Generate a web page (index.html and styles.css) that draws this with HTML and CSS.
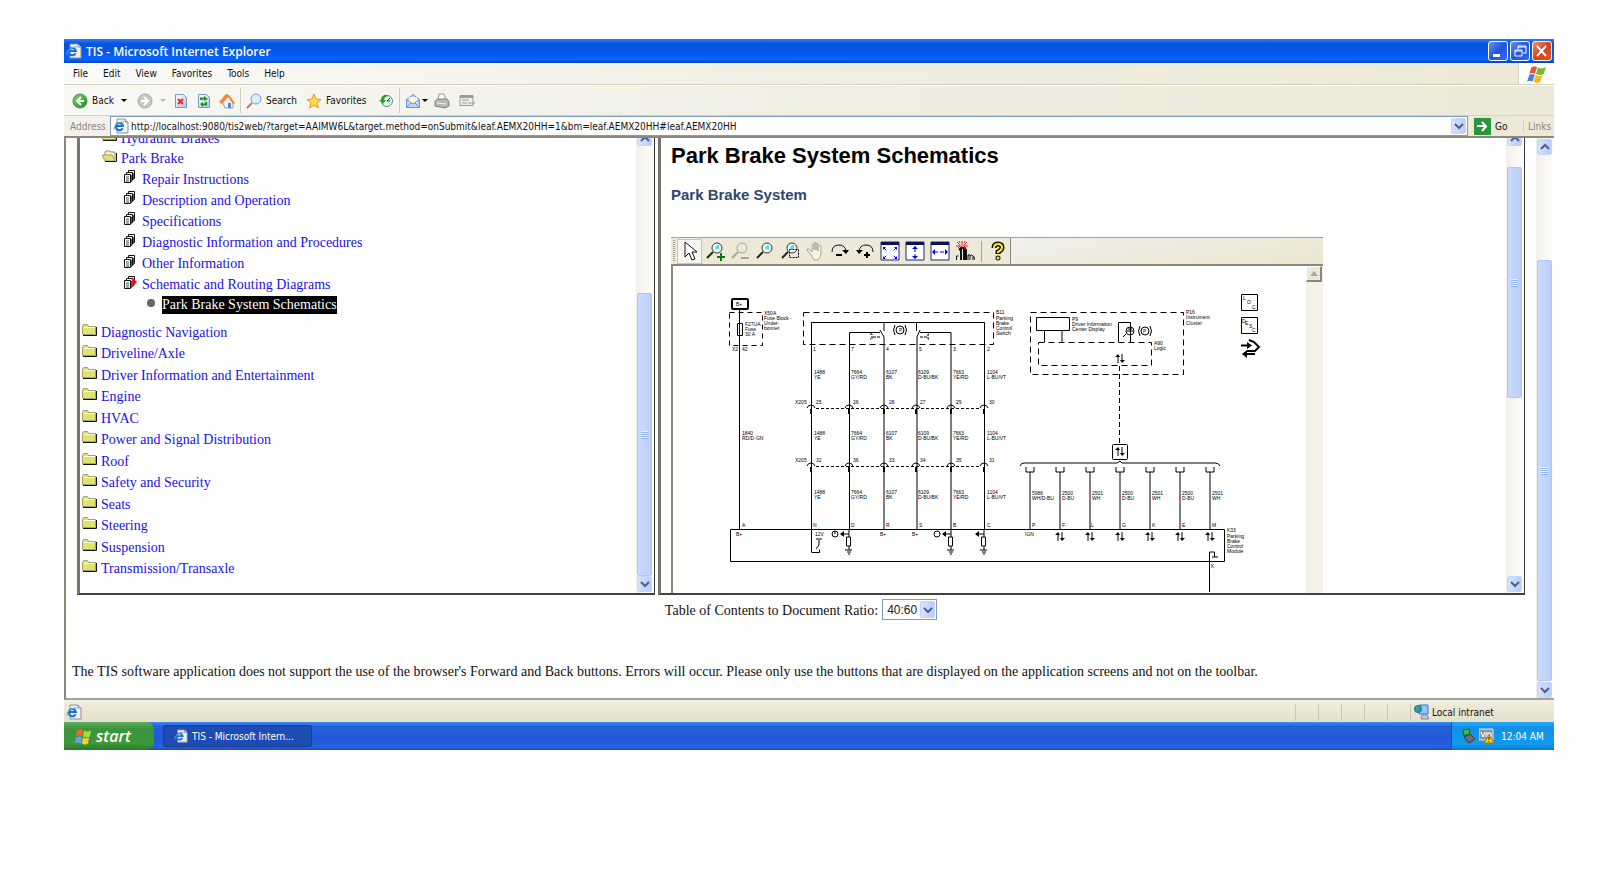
FILE: index.html
```html
<!DOCTYPE html>
<html lang="en">
<head>
  <meta charset="UTF-8" />
  <meta name="viewport" content="width=device-width, initial-scale=1" />
  <title>TIS - Microsoft Internet Explorer</title>
  <link rel="stylesheet" href="styles.css">
</head>
<body>

<!-- Shared icons -->
<svg class="defs" width="0" height="0" aria-hidden="true">
  <defs>
    <linearGradient id="green" x1="0" y1="0" x2="1" y2="1"><stop offset="0" stop-color="#7fd47c"/><stop offset="1" stop-color="#1d8a1d"/></linearGradient>
    <linearGradient id="page-fill" x1="0" y1="0" x2="1" y2="1"><stop offset="0" stop-color="#fff"/><stop offset="1" stop-color="#a9c6f2"/></linearGradient>
    <symbol id="ie" viewBox="0 0 16 16">
      <path d="M4 1h8l3 3v11H4z" fill="#f4f2e6" stroke="#8a8fa8"/>
      <path d="M12 1v3h3" fill="#cdd3e6" stroke="#8a8fa8"/>
      <path d="M9.6 10.2A3.6 3.6 0 1 1 9.9 8H3.4" fill="none" stroke="#1c6fd0" stroke-width="2"/>
      <path d="M1 12C0 8 6 3 11 4" fill="none" stroke="#4fb0f0"/>
    </symbol>
    <symbol id="flag" viewBox="0 0 18 16">
      <path d="M4 2q3-2 5 0l-2 6q-2-2-5 0z" fill="#e8562a"/>
      <path d="M10 2q3 2 7 0l-2 6q-3 2-7 0z" fill="#79b935"/>
      <path d="M2 9q3-2 5 0l-2 6q-2-2-5 0z" fill="#4a80d8"/>
      <path d="M8 9q3 2 6 0l-2 6q-3 2-6 0z" fill="#f6b91c"/>
    </symbol>
    <symbol id="flag-bright" viewBox="0 0 18 16">
      <path d="M3 2q3-2 6 0l-1 6q-3-2-6 0z" fill="#f0662c"/>
      <path d="M10 2q3 2 7 0l-1 6q-3 2-7 0z" fill="#a4dc3c"/>
      <path d="M2 9q3-2 6 0l-1 6q-3-2-6 0z" fill="#6c9cf4"/>
      <path d="M9 9q3 2 6 0l-1 6q-3 2-6 0z" fill="#fcd02c"/>
    </symbol>
    <symbol id="chev-down" viewBox="0 0 10 8"><path d="M1 2l4 4 4-4" fill="none" stroke="#4d6185" stroke-width="2"/></symbol>
    <symbol id="chev-up" viewBox="0 0 10 8"><path d="M1 6l4-4 4 4" fill="none" stroke="#4d6185" stroke-width="2"/></symbol>
    <symbol id="caret" viewBox="0 0 6 4"><path d="M0 0h6L3 3z"/></symbol>
    <symbol id="folder" viewBox="0 0 15 12">
      <path d="M.5 10.500v-8l1-2h4l1 2h7v8z" fill="#e3e36c" stroke="#a0a078"/>
      <path d="M2 3.500h11" stroke="#ffffe0"/>
      <path d="M1 11.500h13.500V3" fill="none" stroke="#111"/>
    </symbol>
    <symbol id="folder-open" viewBox="0 0 15 12">
      <path d="M3 9V2l1-1h4l1 1h4v8" fill="#f5f5c0" stroke="#909070"/>
      <path d="M0 5h10l3 6H3z" fill="#e3e36c" stroke="#a0a070"/>
      <path d="M3 11.500h11.500V3" fill="none" stroke="#111"/>
    </symbol>
    <symbol id="docs" viewBox="0 0 14 13">
      <path d="M4.500 .5h6v8h-6z" fill="#fff" stroke="#111"/>
      <path d="M2.500 2.500h6v8h-6z" fill="#fff" stroke="#111"/>
      <path d="M.5 4.500h6v8h-6z" fill="#fff" stroke="#111"/>
      <path d="M2 7h3M2 9h3M2 11h3" stroke="#2c5a50"/>
      <path d="M7.500 5v7M9.500 3v7" stroke="#555"/>
    </symbol>
    <symbol id="lens" viewBox="0 0 20 20">
      <circle cx="12" cy="7" r="5" fill="#f6ffff" stroke="#333"/>
      <path d="M10 8q0-4 4-4v4z" fill="#53dbe6"/>
      <path d="M8 11l-6 6" stroke="#222" stroke-width="2"/>
    </symbol>
  </defs>
</svg>

<div class="window">
  <header class="titlebar">
    <svg width="16" height="16"><use href="#ie"/></svg>
    <span class="title">TIS - Microsoft Internet Explorer</span>
    <button class="win-btn" aria-label="Minimize"><svg width="18" height="18"><path d="M4 12h7v3H4z" fill="#fff"/></svg></button>
    <button class="win-btn" aria-label="Restore"><svg width="18" height="18" fill="none" stroke="#fff"><path d="M7 7V4h8v7h-3M7 5h8"/><path d="M4 8h7v6H4zM4 9h7"/></svg></button>
    <button class="win-btn close" aria-label="Close"><svg width="18" height="18"><path d="M4 4l9 10M13 4L4 14" stroke="#fff" stroke-width="2"/></svg></button>
  </header>

  <nav class="menubar">
    <a href="#">File</a>
    <a href="#">Edit</a>
    <a href="#">View</a>
    <a href="#">Favorites</a>
    <a href="#">Tools</a>
    <a href="#">Help</a>
    <span class="throbber"><svg width="20" height="18"><use href="#flag"/></svg></span>
  </nav>

  <div class="toolbar">
    <button class="tool back">
      <svg width="16" height="16"><circle cx="8" cy="8" r="7" fill="url(#green)" stroke="#3f9c3c"/><path d="M9 4L5 8l4 4M5 8h7" fill="none" stroke="#fff" stroke-width="2"/></svg>
      Back
      <svg class="caret" width="6" height="4"><use href="#caret"/></svg>
    </button>
    <button class="tool forward" aria-label="Forward">
      <svg width="16" height="16"><circle cx="8" cy="8" r="7" fill="#c9c9c9" stroke="#a9a9a9"/><path d="M7 4l4 4-4 4M11 8H4" fill="none" stroke="#fff" stroke-width="2"/></svg>
      <svg class="caret" width="6" height="4" fill="#bbb"><use href="#caret"/></svg>
    </button>
    <button class="tool" aria-label="Stop"><svg width="16" height="16"><path d="M2.500 1.500h8l3 3v10h-11z" fill="url(#page-fill)" stroke="#8097c4"/><path d="M5 6l5 5M10 6l-5 5" stroke="#e0301a" stroke-width="2"/></svg></button>
    <button class="tool" aria-label="Refresh"><svg width="16" height="16"><path d="M2.500 1.500h8l3 3v10h-11z" fill="url(#page-fill)" stroke="#8097c4"/><path d="M5 7V5.500h4M10 9v2.500H6" fill="none" stroke="#1c951c" stroke-width="2"/><path d="M8 3l4 3-4 2zM7 9l-3 2 3 3z" fill="#1c951c"/></svg></button>
    <button class="tool" aria-label="Home"><svg width="16" height="16"><path d="M3 8l6-5 5 6v6H6z" fill="#eef3ff" stroke="#8aa0d0"/><path d="M0 9l7-8 3 1 6 8-2 1-5-7-6 7z" fill="#f08a35"/><path d="M9 10h3v5H9z" fill="#5c86cc"/></svg></button>
    <span class="sep"></span>
    <button class="tool labelled"><svg width="16" height="16"><circle cx="10" cy="6" r="5" fill="#d9efff" stroke="#6f9fd8"/><path d="M6 10l-5 5" stroke="#c07a52" stroke-width="2"/></svg> Search</button>
    <button class="tool labelled fav"><svg width="16" height="16"><path d="M8 1l2 5 5 .5-4 3.500 1.500 5L8 12l-4.500 3L5 10 1 6.500 6 6z" fill="#ffe04a" stroke="#e0961e"/></svg> Favorites</button>
    <button class="tool" aria-label="History"><svg width="16" height="16"><circle cx="9" cy="8" r="5.500" fill="#e4f3ec" stroke="#5c8f7c"/><path d="M9 8l3-3M9 8h3" stroke="#333"/><path d="M1 7l4 4 3-4H6c0-2 2-4 5-4C7 0 3 3 3 7z" fill="#2ea02c"/></svg></button>
    <span class="sep"></span>
    <button class="tool mail" aria-label="Mail">
      <svg width="16" height="16"><path d="M1.500 6.500L8 1.500l6.500 5v8h-13z" fill="#bcd8fa" stroke="#6c93cf"/><path d="M4 4h8v6H4z" fill="#fff4d8"/><path d="M2 7l6 4 6-4M2 14l4-4M14 14l-4-4" fill="none" stroke="#6c93cf"/></svg>
      <svg class="caret" width="6" height="4"><use href="#caret"/></svg>
    </button>
    <button class="tool" aria-label="Print"><svg width="16" height="16"><path d="M4 7l1-6h5l2 6z" fill="#fff" stroke="#999"/><path d="M1 8l3-2h9l2 3v4l-4 2-10-2z" fill="#b8b8b8" stroke="#808080"/><path d="M3 10l9 1" stroke="#f4f4f4"/></svg></button>
    <button class="tool edit" aria-label="Discuss"><svg width="16" height="16"><path d="M1 2.500h13v10H1z" fill="#eee" stroke="#9a9a9a"/><path d="M1 4h13" stroke="#9a9a9a" stroke-width="2"/><path d="M3 7h7M3 10h5M9 10h7" stroke="#9a9a9a"/></svg></button>
  </div>

  <div class="addressbar">
    <label for="url">Address</label>
    <div class="url-box">
      <svg width="16" height="16"><use href="#ie"/></svg>
      <input id="url" type="text" value="http://localhost:9080/tis2web/?target=AAIMW6L&amp;target.method=onSubmit&amp;leaf.AEMX20HH=1&amp;bm=leaf.AEMX20HH#leaf.AEMX20HH">
      <button class="drop" aria-label="History"><svg width="10" height="8"><use href="#chev-down"/></svg></button>
    </div>
    <button class="go"><svg width="17" height="17"><path d="M0 0h17v17H0z" fill="#28963a"/><path d="M3 8h9M8 4l4 4.500L8 13" fill="none" stroke="#fff" stroke-width="2"/></svg> Go</button>
    <span class="links">Links</span>
  </div>

  <div class="page">
    <main class="page-body">
      <div class="frames">
        <section class="frame">
          <div class="toc">
            <ul class="level1">
              <li class="cut"><svg width="15" height="12"><use href="#folder"/></svg><a href="#">Hydraulic Brakes</a></li>
              <li><svg width="15" height="12"><use href="#folder-open"/></svg><a href="#">Park Brake</a></li>
            </ul>
            <ul class="level2">
              <li><svg width="14" height="13"><use href="#docs"/></svg><a href="#">Repair Instructions</a></li>
              <li><svg width="14" height="13"><use href="#docs"/></svg><a href="#">Description and Operation</a></li>
              <li><svg width="14" height="13"><use href="#docs"/></svg><a href="#">Specifications</a></li>
              <li><svg width="14" height="13"><use href="#docs"/></svg><a href="#">Diagnostic Information and Procedures</a></li>
              <li><svg width="14" height="13"><use href="#docs"/></svg><a href="#">Other Information</a></li>
              <li><svg width="14" height="13"><use href="#docs"/><path d="M8 1l5 5-5 5z" fill="#e8101c"/></svg><a href="#">Schematic and Routing Diagrams</a></li>
            </ul>
            <div class="level3"><svg width="8" height="8"><circle cx="4" cy="4" r="4" fill="#666"/></svg><a href="#">Park Brake System Schematics</a></div>
            <ul class="level0">
              <li><svg width="15" height="12"><use href="#folder"/></svg><a href="#">Diagnostic Navigation</a></li>
              <li><svg width="15" height="12"><use href="#folder"/></svg><a href="#">Driveline/Axle</a></li>
              <li><svg width="15" height="12"><use href="#folder"/></svg><a href="#">Driver Information and Entertainment</a></li>
              <li><svg width="15" height="12"><use href="#folder"/></svg><a href="#">Engine</a></li>
              <li><svg width="15" height="12"><use href="#folder"/></svg><a href="#">HVAC</a></li>
              <li><svg width="15" height="12"><use href="#folder"/></svg><a href="#">Power and Signal Distribution</a></li>
              <li><svg width="15" height="12"><use href="#folder"/></svg><a href="#">Roof</a></li>
              <li><svg width="15" height="12"><use href="#folder"/></svg><a href="#">Safety and Security</a></li>
              <li><svg width="15" height="12"><use href="#folder"/></svg><a href="#">Seats</a></li>
              <li><svg width="15" height="12"><use href="#folder"/></svg><a href="#">Steering</a></li>
              <li><svg width="15" height="12"><use href="#folder"/></svg><a href="#">Suspension</a></li>
              <li><svg width="15" height="12"><use href="#folder"/></svg><a href="#">Transmission/Transaxle</a></li>
            </ul>
          </div>
          <div class="scrollbar">
            <span class="arrow cut-arrow"><svg width="10" height="8"><use href="#chev-up"/></svg></span>
            <span class="thumb toc-thumb"><i></i></span>
            <span class="arrow"><svg width="10" height="8"><use href="#chev-down"/></svg></span>
          </div>
        </section>

        <section class="frame">
          <div class="doc">
            <h1>Park Brake System Schematics</h1>
            <h2>Park Brake System</h2>
            <div class="viewer">
              <div class="viewer-bar">
                <span class="grip"></span>
                <button class="vbtn active" aria-label="Select"><svg width="20" height="20"><path d="M5 1v15l4-4 3 7 3-1-3-7h5z" fill="#fff" stroke="#111"/></svg></button>
                <button class="vbtn" aria-label="Zoom in"><svg width="20" height="20"><use href="#lens"/><path d="M12 16h8M16 12v8" stroke="#0a7a0a" stroke-width="2"/></svg></button>
                <button class="vbtn" aria-label="Zoom out" disabled><svg width="20" height="20"><circle cx="12" cy="7" r="5" fill="none" stroke="#aaa797"/><path d="M8 11l-6 6M11 17h8" stroke="#aaa797" stroke-width="2"/></svg></button>
                <button class="vbtn" aria-label="Zoom"><svg width="20" height="20"><use href="#lens"/></svg></button>
                <button class="vbtn" aria-label="Zoom area"><svg width="20" height="20"><use href="#lens"/><path d="M9.500 8.500h9v8h-9z" fill="none" stroke="#111" stroke-dasharray="2 1"/></svg></button>
                <button class="vbtn" aria-label="Pan" disabled><svg width="20" height="20"><path d="M6 14L2 9q0-2 2-1l3 3V4q1-2 2 0v5-7q1-2 2 0v7-6q1-2 2 0v7-5q2-2 3 0v8q-1 4-3 6H9z" fill="#f4f2e6" stroke="#aaa797"/></svg></button>
                <button class="vbtn" aria-label="Rotate clockwise"><svg width="20" height="20"><path d="M2 11q0-7 7-7 6 0 7 6" fill="none" stroke="#111"/><path d="M12 9h7l-3 4zM6 13h6v2H6z"/></svg></button>
                <button class="vbtn" aria-label="Rotate counter-clockwise"><svg width="20" height="20"><path d="M4 10q1-6 7-6 7 0 7 7" fill="none" stroke="#111"/><path d="M1 9h7l-4 4zM9 13h6v2H9zM11 11h2v6h-2z"/></svg></button>
                <button class="vbtn" aria-label="Fit page"><svg width="20" height="20"><path d="M1 1h18v18H1z" fill="#fff" stroke="#222a66"/><path d="M1 1h18v3H1z" fill="#0c1060"/><path d="M4 7l3 3M16 7l-3 3M4 17l3-3M16 17l-3-3" stroke="#00f" stroke-dasharray="3 1"/><path d="M3 6h3L3 9zM17 6h-3l3 3zM3 18h3l-3-3zM17 18h-3l3-3z" fill="#00f"/></svg></button>
                <button class="vbtn" aria-label="Fit height"><svg width="20" height="20"><path d="M1 1h18v18H1z" fill="#fff" stroke="#222a66"/><path d="M1 1h18v3H1z" fill="#0c1060"/><path d="M10 7v10" stroke="#00f" stroke-dasharray="4 2"/><path d="M10 5l3 3H7zM10 18l3-3H7z" fill="#00f"/></svg></button>
                <button class="vbtn" aria-label="Fit width"><svg width="20" height="20"><path d="M1 1h18v18H1z" fill="#fff" stroke="#222a66"/><path d="M1 1h18v3H1z" fill="#0c1060"/><path d="M4 11h12" stroke="#00f" stroke-dasharray="4 2"/><path d="M2 11l3-3v6zM18 11l-3-3v6z" fill="#00f"/></svg></button>
                <button class="vbtn" aria-label="Highlight"><svg width="20" height="20"><path d="M7 0v4M2 1l3 3M12 1L9 4M1 5h12M4 0l1 2M10 0L9 2M3 7l2-2M11 7L9 5" stroke="#f02020"/><path d="M6 7v12M9 7v12M4 9l2-2h3l2 2v10" fill="none" stroke="#111" stroke-width="2"/><path d="M1.500 19v-4h2M13 19v-5q2-1 2 1v4m0-4q2-2 3 0v4m0-3q2-1 2 3" fill="none" stroke="#111"/></svg></button>
                <span class="vsep"></span>
                <button class="vbtn" aria-label="Help"><svg width="20" height="20"><path d="M6 7q0-4 4-4t4 3.500q0 2.500-4 4.500v2" fill="none" stroke="#111" stroke-width="5"/><circle cx="10" cy="17" r="2.500" fill="#111"/><path d="M6 7q0-4 4-4t4 3.500q0 2.500-4 4.500v1" fill="none" stroke="#ffe81a" stroke-width="2"/><circle cx="10" cy="17" r="1.500" fill="#ffe81a"/></svg></button>
                <span class="bar-rest"></span>
              </div>
              <div class="canvas">
                <svg class="schematic" width="633" height="328" viewBox="673 266 633 328">
                  <defs>
                    <g id="conn"><path d="M-4 3q1-3 4-3t4 3" stroke="#000" fill="none"/><path d="M0 4v5" stroke="#000" stroke-width="2"/></g>
                    <g id="updown"><path d="M-2 9V2M2 0v7" stroke="#000"/><path d="M-5 3l3-3 2 3zM0 6h5L2 9z" fill="#000"/></g>
                    <g id="load"><path d="M-2.500 8h4v9h-4zM0 0v8M0 17v4M-4 21h7M-2 23h4M-1 25h2" fill="none" stroke="#000"/></g>
                    <g id="tap"><path d="M-8 5h8" stroke="#000"/><path d="M-9 5l4-3v6z" fill="#000"/></g>
                    <g id="term"><path d="M-4 0v5h8V0M0 5v57" fill="none" stroke="#000"/></g>
                  </defs>

                  <!-- fuse block -->
                  <g fill="none" stroke="#000">
                    <rect x="732" y="299" width="16" height="10" rx="1" stroke-width="2"/>
                    <path d="M739.500 310v219M737.500 323.500h5v12h-5z"/>
                    <path d="M729.500 312.500h33v33h-33z" stroke-dasharray="5 4"/>
                  </g>
                  <text x="736" y="306">B+</text>
                  <text x="745" y="326">F27UA</text><text x="745" y="331">Fuse</text><text x="745" y="336">30 A</text>
                  <text x="764" y="315">X50A</text><text x="764" y="320">Fuse Block -</text><text x="764" y="325">Under-</text><text x="764" y="330">bonnet</text>
                  <text x="732" y="351">X2</text><text x="742" y="351">42</text>
                  <text x="742" y="435">1840</text><text x="742" y="440">RD/D-GN</text>

                  <!-- parking brake switch -->
                  <g fill="none" stroke="#000">
                    <path d="M803.500 312.500h190v32h-190z" stroke-dasharray="6 4"/>
                    <path d="M811.500 552V322.500h173V529M849.500 529V332.500H880M884 322v9M880 330l4 7v192M916.500 322v9M920 330l-3 7v192M920 332.500h31V529"/>
                    <path d="M870 334h2v5h-2M873 337h7M929 334h-1v5h1M927 337h-7" stroke-dasharray="3 1"/>
                    <circle cx="900" cy="330" r="4"/><path d="M895 325q-3 5 0 10M905 325q3 5 0 10"/>
                  </g>
                  <text x="899" y="332">P</text>
                  <text x="996" y="314">B11</text><text x="996" y="320">Parking</text><text x="996" y="325">Brake</text><text x="996" y="330">Control</text><text x="996" y="335">Switch</text>
                  <text x="813" y="351">1</text><text x="851" y="351">7</text><text x="886" y="351">4</text><text x="919" y="351">5</text><text x="953" y="351">3</text><text x="987" y="351">2</text>

                  <!-- wire numbers and colours, one row per connector section -->
                  <g id="wire-names">
                    <text x="814" y="374">1488</text><text x="814" y="379">YE</text>
                    <text x="851" y="374">7664</text><text x="851" y="379">GY/RD</text>
                    <text x="886" y="374">6107</text><text x="886" y="379">BK</text>
                    <text x="918" y="374">6109</text><text x="918" y="379">D-BU/BK</text>
                    <text x="953" y="374">7663</text><text x="953" y="379">YE/RD</text>
                    <text x="987" y="374">1104</text><text x="987" y="379">L-BU/VT</text>
                  </g>
                  <use href="#wire-names" y="61"/>
                  <use href="#wire-names" y="120"/>
                  <g id="conn-row">
                    <path d="M816 408.500h164" stroke="#000" stroke-dasharray="3 2"/>
                    <use href="#conn" x="811" y="405"/><use href="#conn" x="849" y="405"/><use href="#conn" x="884" y="405"/><use href="#conn" x="916" y="405"/><use href="#conn" x="951" y="405"/><use href="#conn" x="984" y="405"/>
                    <text x="795" y="404">X205</text>
                  </g>
                  <use href="#conn-row" y="58"/>
                  <text x="816" y="404">25</text><text x="853" y="404">26</text><text x="889" y="404">28</text><text x="920" y="404">27</text><text x="956" y="404">29</text><text x="989" y="404">30</text>
                  <text x="816" y="462">32</text><text x="853" y="462">36</text><text x="889" y="462">33</text><text x="920" y="462">34</text><text x="956" y="462">35</text><text x="989" y="462">31</text>
                  <text x="742" y="527">A</text><text x="813" y="527">N</text><text x="851" y="527">D</text><text x="886" y="527">R</text><text x="919" y="527">S</text><text x="953" y="527">B</text><text x="987" y="527">C</text>

                  <!-- control module -->
                  <g fill="none" stroke="#000">
                    <path d="M730.500 529.500h494v32h-494z"/>
                    <path d="M811.500 552.500h8v-3M816 549l3-4v-5M816 539h6"/>
                    <circle cx="835" cy="534" r="3"/><path d="M835 531v3"/><circle cx="937" cy="534" r="3"/>
                    <use href="#load" x="849" y="529"/><use href="#load" x="951" y="529"/><use href="#load" x="984" y="529"/>
                    <path d="M1209.500 592v-40h5v5M1212 557h6"/>
                  </g>
                  <use href="#tap" x="849" y="529"/><use href="#tap" x="951" y="529"/><use href="#tap" x="984" y="529"/>
                  <text x="736" y="536">B+</text><text x="815" y="536">12V</text><text x="880" y="536">B+</text><text x="912" y="536">B+</text><text x="1025" y="536">IGN</text>
                  <text x="1211" y="568">K</text>
                  <text x="1227" y="532">K33</text><text x="1227" y="538">Parking</text><text x="1227" y="543">Brake</text><text x="1227" y="548">Control</text><text x="1227" y="553">Module</text>

                  <!-- instrument cluster -->
                  <g fill="none" stroke="#000">
                    <path d="M1030.500 312.500h153v62h-153z" stroke-dasharray="6 4"/>
                    <path d="M1038.500 342.500h113v23h-113z" stroke-dasharray="6 4"/>
                    <path d="M1036.500 317.500h33v13h-33zM1044.500 331v11M1062 331v11M1118.500 342v-19.500h12V342"/>
                    <circle cx="1130" cy="331" r="4"/><path d="M1127 331h6M1128 329h4M1123 337l3-3"/>
                    <circle cx="1145" cy="331" r="4"/><path d="M1140 326q-3 5 0 10M1150 326q3 5 0 10"/>
                    <path d="M1119.500 366v78" stroke-dasharray="5 3"/>
                    <rect x="1112.500" y="444.500" width="15" height="15" rx="1"/>
                    <path d="M1020 466q1-3 4-3h93l3-2 2 2h93q4 0 5 3"/>
                  </g>
                  <use href="#updown" x="1120" y="354"/><use href="#updown" x="1120" y="447"/>
                  <text x="1143" y="333">P</text>
                  <text x="1072" y="321">P9</text><text x="1072" y="326">Driver Information</text><text x="1072" y="331">Center Display</text>
                  <text x="1154" y="345">A90</text><text x="1154" y="350">Logic</text>
                  <text x="1186" y="314">P16</text><text x="1186" y="319">Instrument</text><text x="1186" y="325">Cluster</text>

                  <!-- serial data terminals -->
                  <use href="#term" x="1030" y="467"/><use href="#term" x="1060" y="467"/><use href="#term" x="1090" y="467"/><use href="#term" x="1120" y="467"/><use href="#term" x="1150" y="467"/><use href="#term" x="1180" y="467"/><use href="#term" x="1210" y="467"/>
                  <text x="1032" y="495">5986</text><text x="1032" y="500">WH/D-BU</text>
                  <text x="1062" y="495">2500</text><text x="1062" y="500">D-BU</text>
                  <text x="1092" y="495">2501</text><text x="1092" y="500">WH</text>
                  <text x="1122" y="495">2500</text><text x="1122" y="500">D-BU</text>
                  <text x="1152" y="495">2501</text><text x="1152" y="500">WH</text>
                  <text x="1182" y="495">2500</text><text x="1182" y="500">D-BU</text>
                  <text x="1212" y="495">2501</text><text x="1212" y="500">WH</text>
                  <text x="1032" y="527">P</text><text x="1062" y="527">F</text><text x="1091" y="527">L</text><text x="1122" y="527">G</text><text x="1152" y="527">K</text><text x="1182" y="527">E</text><text x="1212" y="527">M</text>
                  <use href="#updown" x="1060" y="532"/><use href="#updown" x="1090" y="532"/><use href="#updown" x="1120" y="532"/><use href="#updown" x="1150" y="532"/><use href="#updown" x="1180" y="532"/><use href="#updown" x="1210" y="532"/>

                  <!-- reference buttons -->
                  <g fill="none" stroke="#000"><path d="M1241.500 294.500h16v16h-16zM1241.500 317.500h16v16h-16z"/></g>
                  <text x="1243" y="300">L</text><text x="1247" y="304">O</text><text x="1252" y="309">C</text>
                  <text x="1242" y="323">D</text><text x="1245" y="325">E</text><text x="1249" y="328">S</text><text x="1252" y="332">C</text>
                  <path d="M1241 345.500h9M1249 340l5 2 5 5-4 4h-8M1255 354h-12" fill="none" stroke="#000" stroke-width="2"/>
                  <path d="M1247 342l5 3.500-5 3.500zM1247 350l-5 4 5 4z"/>
                </svg>
                <div class="canvas-scroll"><span><svg width="8" height="5"><path d="M4 0l4 5H0z" fill="#aaa797"/></svg></span></div>
              </div>
            </div>
          </div>
          <div class="scrollbar">
            <span class="arrow cut-arrow"><svg width="10" height="8"><use href="#chev-up"/></svg></span>
            <span class="thumb doc-thumb"><i></i></span>
            <span class="arrow"><svg width="10" height="8"><use href="#chev-down"/></svg></span>
          </div>
        </section>
      </div>

      <div class="ratio">
        <label for="ratio">Table of Contents to Document Ratio:</label>
        <span class="select">
          <select id="ratio"><option>40:60</option><option>50:50</option><option>60:40</option></select>
          <span class="select-arrow"><svg width="10" height="8"><use href="#chev-down"/></svg></span>
        </span>
      </div>
      <p class="note">The TIS software application does not support the use of the browser's Forward and Back buttons. Errors will occur. Please only use the buttons that are displayed on the application screens and not on the toolbar.</p>
    </main>
    <div class="scrollbar page-scroll">
      <span class="arrow"><svg width="10" height="8"><use href="#chev-up"/></svg></span>
      <span class="thumb page-thumb"><i></i></span>
      <span class="arrow"><svg width="10" height="8"><use href="#chev-down"/></svg></span>
    </div>
  </div>

  <footer class="statusbar">
    <svg width="16" height="16"><use href="#ie"/></svg>
    <span class="cells"><i></i><i></i><i></i><i></i><i></i></span>
    <span class="zone">
      <svg width="16" height="16"><path d="M5 1h9v9H5z" fill="#8ec8f8" stroke="#3f78c8"/><path d="M8 11h5l2 4H7z" fill="#c8c8d8" stroke="#8888a0"/><circle cx="4" cy="5" r="4" fill="#2a78d8"/><path d="M2 2q3 0 4 3l-3 3q-2-3-1-6z" fill="#3fb03a"/></svg>
      Local intranet
    </span>
  </footer>

  <div class="taskbar">
    <button class="start"><svg width="18" height="17"><use href="#flag-bright"/></svg>start</button>
    <button class="task"><svg width="14" height="14"><use href="#ie"/></svg>TIS - Microsoft Intern...</button>
    <div class="tray">
      <svg width="14" height="16"><path d="M2 9l6-3 5 5-6 4z" fill="#6c7078" stroke="#333"/><path d="M1 2l7-1-1 6-2-1-3 2z" fill="#3fc03a" stroke="#176b17"/></svg>
      <svg width="15" height="16"><path d="M0 1h14v11H0z" fill="#8d949c" stroke="#e4e6ea"/><path d="M2 4l2 5 2-5M7 9V5h2v4M9 5h3v4" fill="none" stroke="#fff"/><path d="M10 7l5 8H5z" fill="#ffd21e" stroke="#a87800"/><path d="M10 9v3M10 13v1" stroke="#222"/></svg>
      <span>12:04 AM</span>
    </div>
  </div>
</div>

</body>
</html>
```
FILE: styles.css
```css
* {
  box-sizing: border-box;
}
body {
  margin: 0;
  background: #fff;
  font-family: "DejaVu Sans Condensed", "DejaVu Sans", sans-serif;
  font-size: 10px;
  color: #111;
}
button {
  font: inherit;
  color: inherit;
  background: none;
  border: 0;
  padding: 0;
}
svg {
  display: block;
  flex: none;
}
a {
  text-decoration: none;
}
ul {
  list-style: none;
  margin: 0;
  padding: 0;
}
.defs {
  position: absolute;
}
.window {
  margin: 39px 46px 40px 64px;
}

/* title bar */
.titlebar {
  display: flex;
  align-items: center;
  gap: 2px;
  height: 24px;
  padding: 0 2px;
  background: linear-gradient(#2a7ff8, #0453e0 20%, #0559ee 60%, #0666ff 85%, #0340c8);
}
.title {
  flex: 1;
  padding-left: 2px;
  font-family: "Open Sans", sans-serif;
  font-size: 12px;
  font-weight: 600;
  color: #fff;
}
.win-btn {
  width: 20px;
  height: 20px;
  border: 1px solid #fff;
  border-radius: 3px;
  background: linear-gradient(135deg, #6b93f0, #2355d8 50%, #2f6cf0);
}
.win-btn.close {
  background: linear-gradient(135deg, #ef9273, #d9421f 50%, #e0502c);
}

/* menu, toolbar, address */
.menubar {
  display: flex;
  align-items: center;
  gap: 15px;
  height: 22px;
  padding-left: 9px;
  background: linear-gradient(90deg, #fafaf8, #efede0 60%, #ece9d8);
  border-bottom: 1px solid #d8d2bd;
}
.menubar a {
  color: #111;
}
.throbber {
  display: flex;
  align-items: center;
  justify-content: center;
  align-self: stretch;
  width: 36px;
  margin-left: auto;
  background: #fff;
  border-left: 1px solid #d8d2bd;
}
.toolbar {
  display: flex;
  align-items: center;
  height: 31px;
  padding-left: 6px;
  background: linear-gradient(90deg, #f8f8f5, #efede0 60%, #ece9d8);
  border-top: 1px solid #fff;
  border-bottom: 1px solid #d8d2bd;
}
.tool {
  display: flex;
  align-items: center;
  justify-content: center;
  gap: 4px;
  width: 23px;
  height: 24px;
}
.tool .caret {
  margin-left: auto;
}
.back {
  width: 60px;
  padding: 0 3px 0 2px;
}
.forward {
  width: 39px;
  padding: 0 3px 0 7px;
}
.labelled {
  width: 60px;
  justify-content: flex-start;
  padding-left: 3px;
}
.labelled.fav {
  width: 71px;
}
.mail {
  width: 28px;
  gap: 0;
  padding: 0 2px 0 3px;
}
.edit {
  margin-left: 2px;
}
.sep {
  width: 1px;
  height: 25px;
  margin: 0 2px;
  background: #d0cdbb;
}
.addressbar {
  display: flex;
  align-items: center;
  height: 22px;
  padding-left: 6px;
  background: linear-gradient(90deg, #f2f1ea, #ece9d8);
  border-bottom: 2px solid #8b887a;
}
.addressbar label,
.links {
  color: #8a887c;
}
.addressbar label {
  width: 40px;
}
.url-box {
  display: flex;
  align-items: center;
  flex: 1;
  height: 20px;
  padding: 0 1px 0 2px;
  background: #fff;
  border: 1px solid #7f9db9;
}
.url-box input {
  flex: 1;
  min-width: 0;
  padding: 0 0 0 2px;
  border: 0;
  outline: 0;
  font: inherit;
  color: #111;
}
.drop,
.arrow,
.select-arrow {
  display: flex;
  align-items: center;
  justify-content: center;
  width: 15px;
  height: 16px;
  background: linear-gradient(90deg, #d6e2ff, #b9cdfb);
  border: 1px solid #c3d3fb;
  border-radius: 2px;
}
.go {
  display: flex;
  align-items: center;
  gap: 4px;
  width: 55px;
  padding-left: 6px;
}
.links {
  width: 31px;
  padding-left: 4px;
  border-left: 1px solid #d0cdbb;
}

/* page area */
.page {
  display: flex;
  height: 562px;
  padding-right: 1px;
  border-left: 2px solid #8b887a;
  border-bottom: 2px solid #a5a294;
}
.page-body {
  flex: 1;
  min-width: 0;
  font-family: "Liberation Serif", serif;
  font-size: 14px;
}
.frames {
  display: grid;
  grid-template-columns: 2fr 3fr;
  gap: 3px;
  height: 457px;
  margin: 0 11px;
}
.frame {
  display: flex;
  min-width: 0;
  overflow: hidden;
  padding-right: 1px;
  border-left: 3px solid #77756c;
  border-right: 1px solid #333;
  border-bottom: 2px solid #44423c;
}

.scrollbar {
  display: flex;
  flex-direction: column;
  align-items: center;
  flex: none;
  width: 17px;
  padding-bottom: 1px;
  background: linear-gradient(90deg, #f1f0ea, #fdfdfb);
}
.cut-arrow {
  height: 8px;
  border-top: 0;
  align-items: flex-start;
}
.cut-arrow svg {
  margin-top: -3px;
}
.thumb {
  display: flex;
  align-items: center;
  justify-content: center;
  width: 15px;
  background: linear-gradient(90deg, #cbdafd, #bccffb);
  border: 1px solid #b0c5f6;
  border-radius: 2px;
}
.thumb i {
  width: 7px;
  height: 8px;
  background: repeating-linear-gradient(#eef4fe 0 1px, #8cb0f8 1px 2px);
}
.toc-thumb {
  height: 283px;
  margin-top: auto;
}
.doc-thumb {
  height: 231px;
  margin: 21px 0 auto;
}
.page-scroll {
  padding: 1px 0 0;
}
.page-thumb {
  height: 421px;
  margin: auto 0 1px;
}

/* table of contents */
.toc {
  flex: 1;
  padding-left: 2px;
  white-space: nowrap;
}
.toc a {
  color: #1a10f0;
}
.toc ul {
  display: flex;
  flex-direction: column;
}
.toc li {
  display: flex;
  flex: 1;
  align-items: center;
  gap: 4px;
}
.toc li svg {
  margin-bottom: 6px;
}
.toc .level1 {
  gap: 1px;
  height: 31px;
  padding-left: 20px;
}
.toc .cut {
  flex: none;
  height: 9px;
  align-items: flex-end;
}
.level2 {
  height: 127px;
  padding-left: 42px;
}
.level3 {
  display: flex;
  align-items: center;
  gap: 7px;
  height: 18px;
  margin-bottom: 8px;
  padding-left: 65px;
}
.level3 svg {
  margin-bottom: 4px;
}
.toc .level3 a {
  line-height: 18px;
  color: #fff;
  background: #000;
}
.level0 {
  height: 258px;
}

/* document */
.doc {
  flex: 1;
  min-width: 0;
  padding: 5px 0 0 10px;
  font-family: "Liberation Sans", Arial, sans-serif;
}
.doc h1 {
  margin: 0 0 16px;
  font-size: 22px;
  line-height: 26px;
  color: #000;
}
.doc h2 {
  margin: 0 0 32px;
  font-size: 15px;
  line-height: 20px;
  color: #2c4770;
}
.viewer {
  width: 652px;
  border-top: 1px solid #a5a294;
}
.viewer-bar {
  display: flex;
  align-items: center;
  height: 28px;
  padding-left: 2px;
  background: #ece9d8;
  border-bottom: 2px solid #8b887a;
}
.grip {
  width: 2px;
  height: 22px;
  margin-right: 2px;
  background: repeating-linear-gradient(#a5a294 0 1px, #ece9d8 1px 2px);
}
.vbtn {
  display: flex;
  align-items: center;
  justify-content: center;
  width: 25px;
  height: 25px;
}
.vbtn.active {
  background: #f7f6f0;
  border: 1px solid #c9c6b5;
}
.vsep {
  width: 1px;
  height: 21px;
  margin: 0 3px 0 4px;
  background: #a5a294;
}
.bar-rest {
  flex: 1;
  align-self: stretch;
  background: linear-gradient(170deg, #f1f1ea, #ebe6d0);
  border-left: 1px solid #8b887a;
}
.canvas {
  display: flex;
  border-left: 2px solid #8b887a;
}
.schematic {
  font-family: "Liberation Sans", Arial, sans-serif;
  font-size: 5px;
}
.canvas-scroll {
  width: 17px;
  background: #f4f2e8;
}
.canvas-scroll span {
  display: flex;
  align-items: center;
  justify-content: center;
  width: 16px;
  height: 16px;
  background: #ece9d8;
  border: 1px solid #fff;
  border-right: 2px solid #8b887a;
  border-bottom: 2px solid #8b887a;
}

/* below the frames */
.ratio {
  display: flex;
  align-items: center;
  justify-content: center;
  gap: 4px;
  margin-top: 4px;
}
.ratio label {
  padding-top: 3px;
}
.select {
  position: relative;
}
.select select {
  display: block;
  appearance: none;
  width: 55px;
  height: 21px;
  padding: 0 0 0 4px;
  background: #fff;
  border: 1px solid #7f9db9;
  border-radius: 0;
  font-family: "Liberation Sans", Arial, sans-serif;
  font-size: 12px;
  color: #222;
}
.select-arrow {
  position: absolute;
  top: 2px;
  right: 2px;
  height: 17px;
  pointer-events: none;
}
.note {
  margin: 44px 0 0 6px;
  line-height: 16px;
}

/* status bar */
.statusbar {
  display: flex;
  align-items: center;
  height: 22px;
  padding: 2px 0 0 2px;
  background: linear-gradient(#f3f1e6, #ece9d8 30%, #e4e0cc);
}
.cells {
  display: flex;
  margin-left: auto;
}
.cells i {
  width: 23px;
  height: 17px;
  border-left: 1px solid #cbc7b5;
}
.zone {
  display: flex;
  align-items: center;
  gap: 2px;
  width: 144px;
  height: 17px;
  padding-left: 3px;
  border-left: 1px solid #cbc7b5;
}

/* taskbar */
.taskbar {
  display: flex;
  align-items: center;
  height: 28px;
  color: #fff;
  background: linear-gradient(#3f8cf0, #2460dc 15%, #2258d6 60%, #2663e0 90%, #1c48b0);
}
.start {
  display: flex;
  align-items: center;
  gap: 4px;
  width: 90px;
  height: 28px;
  padding-left: 10px;
  font-family: "Open Sans", sans-serif;
  font-size: 16px;
  font-weight: 600;
  font-style: italic;
  background: linear-gradient(#5eac5a, #3a9439 25%, #3c9b3a 75%, #2c7a2b);
  border-radius: 0 8px 8px 0;
}
.task {
  display: flex;
  align-items: center;
  gap: 4px;
  width: 149px;
  height: 22px;
  margin-left: 9px;
  padding-left: 10px;
  background: #1c4cb4;
  border: 1px solid #173f98;
  border-radius: 2px;
}
.tray {
  display: flex;
  align-items: center;
  gap: 3px;
  width: 103px;
  height: 28px;
  margin-left: auto;
  padding-left: 10px;
  background: linear-gradient(#2aa8f4, #1290e8 20%, #129aee 80%, #0f78c8);
  border-left: 1px solid #0c58b0;
}
.tray span {
  margin-left: 4px;
}
```
